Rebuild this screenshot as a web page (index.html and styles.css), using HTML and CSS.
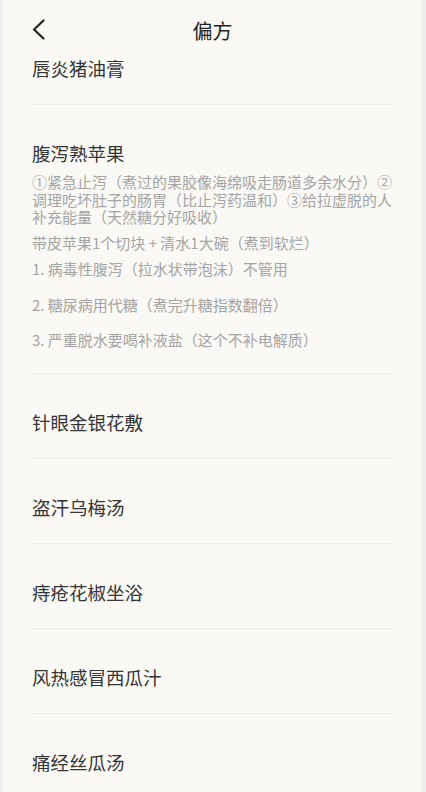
FILE: index.html
```html
<!DOCTYPE html>
<html lang="zh-CN">
<head>
  <meta charset="UTF-8"/>
  <title>偏方</title>
  <link rel="stylesheet" href="styles.css">
</head>
<body>
  <div class="page">
    <header class="topbar">
      <a class="back" href="#">
        <svg width="14" height="22" viewBox="0 0 14 22">
          <path d="M11.5 1.5 L2 10.5 L11.5 19.5" fill="none" stroke="#222" stroke-width="2.2" stroke-linecap="round" stroke-linejoin="round"/>
        </svg>
      </a>
      <h1 class="title">偏方</h1>
    </header>

    <ul class="list">
      <li class="item first"><span class="name">唇炎猪油膏</span></li>

      <li class="item open">
        <span class="name">腹泻熟苹果</span>
        <p class="desc">①紧急止泻（煮过的果胶像海绵吸走肠道多余水分）②调理吃坏肚子的肠胃（比止泻药温和）③给拉虚脱的人补充能量（天然糖分好吸收）</p>
        <p class="desc">带皮苹果1个切块 + 清水1大碗（煮到软烂）</p>
        <ol class="notes">
          <li>1. 病毒性腹泻（拉水状带泡沫）不管用</li>
          <li>2. 糖尿病用代糖（煮完升糖指数翻倍）</li>
          <li>3. 严重脱水要喝补液盐（这个不补电解质）</li>
        </ol>
      </li>

      <li class="item"><span class="name">针眼金银花敷</span></li>
      <li class="item"><span class="name">盗汗乌梅汤</span></li>
      <li class="item"><span class="name">痔疮花椒坐浴</span></li>
      <li class="item"><span class="name">风热感冒西瓜汁</span></li>
      <li class="item"><span class="name">痛经丝瓜汤</span></li>
    </ul>
  </div>
</body>
</html>
```

FILE: styles.css
```css
* {
  box-sizing: border-box;
}

body {
  margin: 0;
  background: #efefef;
  font-family: "Noto Sans CJK SC", "Noto Sans", sans-serif;
}

.page {
  margin: 0 4px 0 3px;
  height: 792px;
  overflow: hidden;
  background: #faf9f5;
}

.topbar {
  position: relative;
  height: 50px;
  display: flex;
  align-items: center;
  justify-content: center;
}

.back {
  position: absolute;
  left: 29px;
  top: 19px;
  display: flex;
}

.title {
  margin: 0;
  font-size: 20px;
  font-weight: 400;
  color: #1e1e1e;
  line-height: 24px;
  padding-top: 12px;
}

.list {
  list-style: none;
  margin: 0;
  padding: 0 28px 0 29px;
}

.item {
  padding: 36px 0 24px;
  border-bottom: 1px solid #efeee9;
}

.item.first {
  padding-top: 6px;
}

.name {
  display: block;
  font-size: 18.5px;
  line-height: 24px;
  color: #353535;
}

.desc {
  margin: 8px 0 0;
  font-size: 15px;
  line-height: 17.5px;
  color: #a4a4a4;
}

.notes {
  list-style: none;
  margin: 9px 0 0;
  padding: 0;
  font-size: 15px;
  line-height: 17.5px;
  color: #a4a4a4;
}

.notes li + li {
  margin-top: 18px;
}
```
